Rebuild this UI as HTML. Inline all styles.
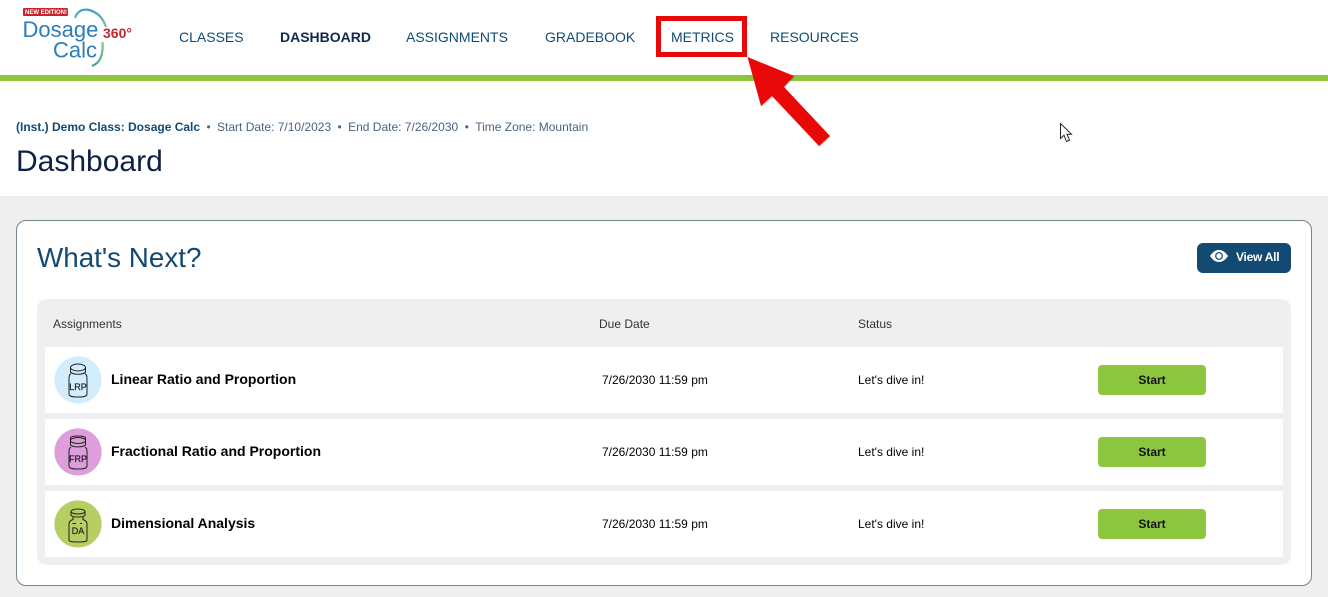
<!DOCTYPE html>
<html><head><meta charset="utf-8"><style>
html,body{margin:0;padding:0}
body{width:1328px;height:597px;overflow:hidden;position:relative;background:#fff;font-family:"Liberation Sans",sans-serif}
.a{position:absolute;white-space:nowrap}
.n{top:29px;font-size:14px;line-height:16px;color:#0f4c75}
.row{position:absolute;left:45px;width:1238px;height:66px;background:#fff}
.t{position:absolute;left:66px;top:24px;font-size:14px;line-height:17px;font-weight:bold;color:#000;white-space:nowrap}
.d{position:absolute;left:557px;top:25px;font-size:12px;line-height:16px;color:#000;white-space:nowrap}
.s{position:absolute;left:813px;top:25px;font-size:12px;line-height:16px;color:#000;white-space:nowrap}
.b{position:absolute;left:1053px;top:18px;width:108px;height:30px;border-radius:4px;background:#8cc63f;color:#111;font-size:12px;font-weight:bold;line-height:30px;text-align:center}
.ic{position:absolute;left:9px;top:9px;width:48px;height:48px}
.h{top:317px;font-size:12px;line-height:14px;color:#333}
.m{margin:0 6.4px}
</style></head><body>

<svg class="a" style="left:15px;top:0" width="125" height="75" viewBox="15 0 125 75">
<defs><linearGradient id="g" x1="0" y1="0" x2="0" y2="1"><stop offset="0" stop-color="#3f9fc0"/><stop offset=".35" stop-color="#8cc79a"/><stop offset=".7" stop-color="#7cc08a"/><stop offset="1" stop-color="#3fa58c"/></linearGradient></defs>
<rect x="23" y="8" width="45" height="8" rx="1" fill="#c8252e"/>
<text x="25" y="14.2" font-family="Liberation Sans" font-size="6" font-weight="bold" fill="#fff">NEW EDITION!</text>
<path d="M75 18C77 11 83 8.500 89 10C97 12 103 18 106 27M102.500 42C103.500 55 100 63 92 66" fill="none" stroke="url(#g)" stroke-width="2.200"/>
<text x="22.500" y="37" font-family="Liberation Sans" font-size="22" fill="#2b7dbd">Dosage</text>
<text x="53" y="57.500" font-family="Liberation Sans" font-size="22" fill="#2b7dbd">Calc</text>
<text x="103" y="38" font-family="Liberation Sans" font-size="14" font-weight="bold" fill="#c4262e">360°</text>
</svg>

<div class="a n" style="left:179px">CLASSES</div>
<div class="a n" style="left:280px;font-weight:bold;color:#0d2b52">DASHBOARD</div>
<div class="a n" style="left:406px">ASSIGNMENTS</div>
<div class="a n" style="left:545px">GRADEBOOK</div>
<div class="a n" style="left:671px">METRICS</div>
<div class="a n" style="left:770px">RESOURCES</div>

<div class="a" style="left:0;top:75px;width:1328px;height:6px;background:#8cc63f"></div>

<div class="a" style="left:656px;top:16px;width:81px;height:31px;border:5px solid #e90808"></div>
<svg class="a" style="left:740px;top:50px" width="100" height="105" viewBox="740 50 100 105">
<polygon points="748.500,59 795,77 785,88 831,137 820,147 773,97 762,107" fill="#000" opacity=".15"/>
<polygon points="747.500,57 794,76 784,87 830,136 819,146 772,96 761,106" fill="#e90808"/>
</svg>

<div class="a" style="left:16px;top:120px;font-size:12px;line-height:14px;color:#4a6480"><b style="color:#134a72">(Inst.) Demo Class: Dosage Calc</b><span class="m">•</span>Start Date: 7/10/2023<span class="m">•</span>End Date: 7/26/2030<span class="m">•</span>Time Zone: Mountain</div>
<div class="a" style="left:16px;top:144px;font-size:30px;line-height:35px;color:#0d2045">Dashboard</div>

<svg class="a" style="left:1058px;top:122px" width="16" height="22" viewBox="0 0 16 22">
<path d="M2.500 1.500V16.500L6 13.200L8.500 19.500L11.500 18.200L9 12.200H13.500Z" fill="#fff" stroke="#222" stroke-width="1"/>
</svg>

<div class="a" style="left:0;top:196px;width:1328px;height:401px;background:#efefef"></div>
<div class="a" style="left:16px;top:220px;width:1294px;height:364px;background:#fff;border:1px solid #76848e;border-radius:10px"></div>

<div class="a" style="left:37px;top:241px;font-size:27.8px;line-height:33px;color:#134a72">What's Next?</div>

<div class="a" style="left:1197px;top:243px;width:94px;height:30px;background:#134a72;border-radius:6px"></div>
<svg class="a" style="left:1209px;top:248px" width="20" height="16" viewBox="0 0 20 16">
<path d="M1 8C4 3.500 7 2 10 2S16 3.500 19 8C16 12.500 13 14 10 14S4 12.500 1 8Z" fill="#fff"/>
<circle cx="10" cy="8" r="3.900" fill="#134a72"/><circle cx="10" cy="8" r="2.700" fill="#fff"/>
</svg>
<div class="a" style="left:1236px;top:249px;font-size:12px;font-weight:bold;line-height:16px;color:#fff;letter-spacing:-.25px">View All</div>

<div class="a" style="left:37px;top:299px;width:1254px;height:266px;background:#efefef;border-radius:10px"></div>
<div class="a h" style="left:53px">Assignments</div>
<div class="a h" style="left:599px">Due Date</div>
<div class="a h" style="left:858px">Status</div>

<div class="row" style="top:347px">
<svg class="ic" viewBox="0 0 48 48"><circle cx="24" cy="24" r="23.600" fill="#d2edfd"/>
<g fill="none" stroke="#222" stroke-width="1"><ellipse cx="24" cy="11.500" rx="7.500" ry="3.500"/><path d="M16.500 11.500V16C19 19 29 19 31.500 16V11.500"/><path d="M17 17.500C15 19 15 21 15 23V38C15 40 17 41 24 41S33 40 33 38V23C33 21 33 19 31 17.500"/></g>
<text x="24" y="34" text-anchor="middle" font-family="Liberation Sans" font-size="9" fill="#222" stroke="#222" stroke-width=".2">LRP</text></svg>
<div class="t">Linear Ratio and Proportion</div><div class="d">7/26/2030 11:59 pm</div><div class="s">Let's dive in!</div><div class="b">Start</div>
</div>

<div class="row" style="top:419px">
<svg class="ic" viewBox="0 0 48 48"><circle cx="24" cy="24" r="23.600" fill="#dd9edb"/>
<g fill="none" stroke="#222" stroke-width="1"><ellipse cx="24" cy="12.500" rx="7.500" ry="3"/><path d="M16.500 9.500V17C19 19.500 29 19.500 31.500 17V9.500C29 7.500 19 7.500 16.500 9.500Z"/><path d="M17 19C15 20.500 15 22 15 24V38C15 40 17 41 24 41S33 40 33 38V24C33 22 33 20.500 31 19"/></g>
<text x="24" y="34" text-anchor="middle" font-family="Liberation Sans" font-size="9" fill="#222" stroke="#222" stroke-width=".2">FRP</text></svg>
<div class="t">Fractional Ratio and Proportion</div><div class="d">7/26/2030 11:59 pm</div><div class="s">Let's dive in!</div><div class="b">Start</div>
</div>

<div class="row" style="top:491px">
<svg class="ic" viewBox="0 0 48 48"><circle cx="24" cy="24" r="23.600" fill="#b7cf62"/>
<g fill="none" stroke="#222" stroke-width="1"><ellipse cx="24" cy="11.500" rx="7" ry="2.500"/><path d="M17 11.500V15.500C20 17.500 28 17.500 31 15.500V11.500"/><path d="M19 17V19.500C16 20.500 15 22 15 24V40C15 41.500 17 42 24 42S33 41.500 33 40V24C33 22 32 20.500 29 19.500V17"/><path d="M18.500 23.500H22M26 23.500H28"/></g>
<text x="24" y="34" text-anchor="middle" font-family="Liberation Sans" font-size="9" fill="#222" stroke="#222" stroke-width=".2">DA</text></svg>
<div class="t">Dimensional Analysis</div><div class="d">7/26/2030 11:59 pm</div><div class="s">Let's dive in!</div><div class="b">Start</div>
</div>

</body></html>
